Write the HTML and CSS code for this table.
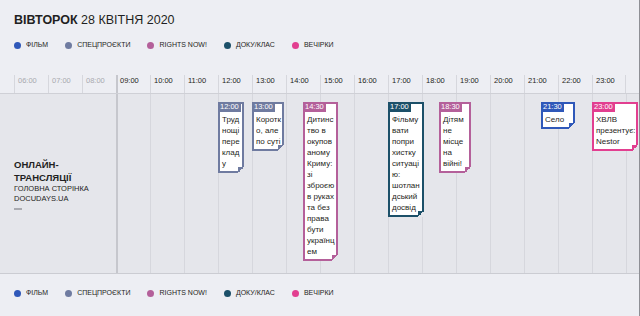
FILE: index.html
```html
<!DOCTYPE html>
<html lang="uk">
<head>
    <meta charset="UTF-8">
    <meta name="viewport" content="width=device-width, initial-scale=1.0">
    <title>Розклад трансляцій</title>
    <link rel="stylesheet" href="styles.css">
</head>
<body>
    <div class="page">
        <header class="day">
            <h1 class="day-title"><b>ВІВТОРОК</b> 28 КВІТНЯ 2020</h1>
            <ul class="legend">
                <li class="film"><span class="dot"></span>ФІЛЬМ</li>
                <li class="special"><span class="dot"></span>СПЕЦПРОЄКТИ</li>
                <li class="rights"><span class="dot"></span>RIGHTS NOW!</li>
                <li class="docu"><span class="dot"></span>ДОКУ/КЛАС</li>
                <li class="party"><span class="dot"></span>ВЕЧІРКИ</li>
            </ul>
        </header>

        <section class="schedule">
            <div class="hours">
                <div class="hour past">06:00</div>
                <div class="hour past">07:00</div>
                <div class="hour past">08:00</div>
                <div class="hour start">09:00</div>
                <div class="hour">10:00</div>
                <div class="hour">11:00</div>
                <div class="hour">12:00</div>
                <div class="hour">13:00</div>
                <div class="hour">14:00</div>
                <div class="hour">15:00</div>
                <div class="hour">16:00</div>
                <div class="hour">17:00</div>
                <div class="hour">18:00</div>
                <div class="hour">19:00</div>
                <div class="hour">20:00</div>
                <div class="hour">21:00</div>
                <div class="hour">22:00</div>
                <div class="hour last">23:00</div>
            </div>

            <div class="channel">
                <div class="channel-name">
                    <strong>ОНЛАЙН-ТРАНСЛЯЦІЇ</strong>
                    <span>ГОЛОВНА СТОРІНКА DOCUDAYS.UA</span>
                    <i class="dash"></i>
                </div>
                <div class="track">
                    <div class="event special" style="left:102px;width:26px">
                        <span class="time">12:00</span>
                        <p>Труднощі перекладу</p>
                    </div>
                    <div class="event special" style="left:136px;width:32px">
                        <span class="time">13:00</span>
                        <p>Коротко, але по суті</p>
                    </div>
                    <div class="event rights" style="left:187px;width:35px">
                        <span class="time">14:30</span>
                        <p>Дитинство в окупованому Криму: зі зброєю в руках та без права бути українцем</p>
                    </div>
                    <div class="event docu" style="left:272px;width:36px">
                        <span class="time">17:00</span>
                        <p>Фільмувати попри хистку ситуацію: шотландський досвід</p>
                    </div>
                    <div class="event rights" style="left:323px;width:32px">
                        <span class="time">18:30</span>
                        <p>Дітям не місце на війні!</p>
                    </div>
                    <div class="event film" style="left:425px;width:34px">
                        <span class="time">21:30</span>
                        <p>Село</p>
                    </div>
                    <div class="event party" style="left:476px;width:46px">
                        <span class="time">23:00</span>
                        <p>ХВЛВ презентує: Nestor</p>
                    </div>
                </div>
            </div>
        </section>

        <footer class="day">
            <ul class="legend">
                <li class="film"><span class="dot"></span>ФІЛЬМ</li>
                <li class="special"><span class="dot"></span>СПЕЦПРОЄКТИ</li>
                <li class="rights"><span class="dot"></span>RIGHTS NOW!</li>
                <li class="docu"><span class="dot"></span>ДОКУ/КЛАС</li>
                <li class="party"><span class="dot"></span>ВЕЧІРКИ</li>
            </ul>
        </footer>
    </div>
</body>
</html>
```

FILE: styles.css
```css
body {
    margin: 0;
    font-family: "Liberation Sans", Arial, sans-serif;
    color: #1f1f22;
    background: #edeef3;
}
.page {
    width: 640px;
    height: 316px;
    box-sizing: border-box;
    border-right: 1px solid #8e8f95;
    overflow: hidden;
}
/* category colours */
.film { --c: #2f58b9; }
.special { --c: #6f7ba0; }
.rights { --c: #b4609a; }
.docu { --c: #1c5069; }
.party { --c: #e23f90; }

.day {
    padding: 12px 14px 0;
}
.day-title {
    margin: 0;
    font-size: 12.5px;
    line-height: 16px;
    font-weight: normal;
}
.legend {
    display: flex;
    gap: 17px;
    margin: 12px 0 0;
    padding: 0;
    list-style: none;
    font-size: 7px;
    line-height: 10px;
}
.legend li {
    display: flex;
    align-items: center;
    gap: 5px;
}
.dot {
    width: 7px;
    height: 7px;
    border-radius: 50%;
    background: var(--c);
}
footer.day {
    padding-top: 14px;
}
footer .legend {
    margin-top: 0;
}

/* timeline */
.schedule {
    margin-top: 25px;
}
.hours {
    display: flex;
    padding-left: 14px;
    border-bottom: 1px solid #cfd0d6;
}
.hour {
    width: 34px;
    height: 18px;
    box-sizing: border-box;
    padding: 1px 0 0 3px;
    border-left: 1px solid #d6d7dd;
    font-size: 7.5px;
    line-height: 10px;
}
.hour.past {
    color: #a8a9af;
}
.hour.start {
    border-left: 2px solid #c6c7cd;
    padding-left: 2px;
}
.hour.last {
    border-right: 1px solid #d6d7dd;
}
.channel {
    display: flex;
    height: 179px;
    background: #e5e6eb;
    border-bottom: 1px solid #cbccd2;
}
.channel-name {
    width: 116px;
    flex-shrink: 0;
    box-sizing: border-box;
    padding: 0 22px 0 14px;
    align-self: center;
}
.channel-name strong {
    display: block;
    font-size: 9.5px;
    line-height: 13px;
}
.channel-name span {
    display: block;
    font-size: 7.5px;
    line-height: 10px;
}
.dash {
    display: block;
    width: 8px;
    height: 2px;
    margin-top: 4px;
    background: #a9aab0;
}
.track {
    position: relative;
    flex: 1;
    overflow: hidden;
    background:
        linear-gradient(#c6c7cd, #c6c7cd) 0 0 / 2px 100% no-repeat,
        repeating-linear-gradient(90deg, #d6d7dd 0 1px, transparent 1px 34px);
}
.event {
    position: absolute;
    top: 8px;
    box-sizing: border-box;
    padding: 0 0 2px 2px;
    background: #fff;
    border: 2px solid var(--c);
}
.event::after {
    content: "";
    position: absolute;
    right: -2px;
    bottom: -2px;
    width: 6px;
    height: 6px;
    background: linear-gradient(135deg, var(--c) 50%, #e5e6eb 50%);
}
.event .time {
    display: block;
    width: fit-content;
    margin: -2px 0 0 -4px;
    padding: 0 2px;
    background: var(--c);
    color: #fff;
    font-size: 7.5px;
    line-height: 10px;
}
.event p {
    margin: 2px 0 0;
    font-size: 8px;
    line-height: 11px;
    overflow-wrap: break-word;
}
```
